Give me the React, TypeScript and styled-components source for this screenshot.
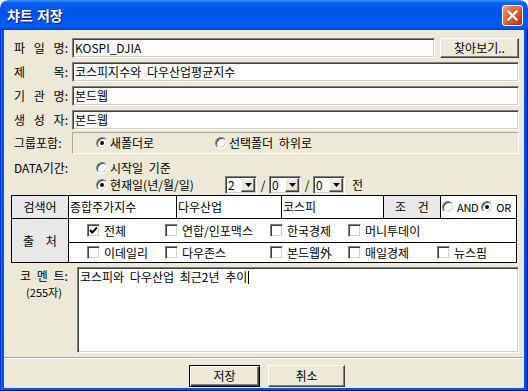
import React from "react";
import styled, { createGlobalStyle, css } from "styled-components";

const GlobalStyle = createGlobalStyle`
  html, body { margin: 0; padding: 0; background: #ffffff; }
  body {
    width: 528px; height: 391px; overflow: hidden;
    font-family: "Noto Sans CJK KR", "Noto Sans", sans-serif;
    font-size: 12px; line-height: 14px; color: #000; word-spacing: 3px;
  }
  * { box-sizing: border-box; }
`;

const Window = styled.div`
  width: 528px; height: 391px;
  display: flex; flex-direction: column;
  border-radius: 8px 8px 0 0; overflow: hidden;
`;

const TitleBar = styled.div`
  height: 30px; flex: none;
  display: flex; align-items: center; justify-content: space-between;
  padding: 0 5px 0 7px;
  background: linear-gradient(180deg, #3d95ff 0%, #0a5ff0 10%, #0054e8 40%, #005cf5 85%, #0058ee 93%, #0045d6 97%, #003dd0 100%);
  border-radius: 8px 8px 0 0;
`;

const TitleText = styled.span`
  color: #fff; font-weight: bold; font-size: 14px; line-height: 16px;
  word-spacing: 1px;
  text-shadow: 1px 1px #0f1089;
`;

const CloseButton = styled.span`
  width: 21px; height: 21px; display: flex; align-items: center; justify-content: center;
  border: 1px solid #fff; border-radius: 3px;
  background: radial-gradient(circle at 85% 85%, #c23c10 0%, #d9582a 45%, #e37a55 75%, #f2b79c 100%);
  box-shadow: inset -1px -1px 1px rgba(120, 30, 0, 0.4);
`;

const Frame = styled.div`
  flex: 1; display: flex; min-height: 0;
  padding: 0 4px 3px 4px;
  background: #0055e5;
  box-shadow: inset 1px 0 #0831d9, inset -1px 0 #00138c, inset 0 -1px #00138c, inset 2px 0 #166aee, inset -2px 0 #003bda;
`;

const Client = styled.div`
  flex: 1; display: flex; flex-direction: column; min-height: 0;
  background: #ece9d8;
  padding: 8px 5px 0 7px;
`;

const FieldRow = styled.div<{ $top?: number; $height?: number }>`
  display: flex; align-items: center; height: ${(p) => p.$height ?? 20}px;
  margin-top: ${(p) => p.$top ?? 4}px;
`;

const FieldLabel = styled.div`
  width: 57px; margin-right: 4px; padding-left: 3px;
  display: flex; justify-content: space-between; white-space: nowrap;
`;

const sunken = css`
  background: #fff;
  border: 1px solid; border-color: #808080 #fff #fff #808080;
  box-shadow: inset 1px 1px #404040, inset -1px -1px #d4d0c8;
`;

const TextBox = styled.div`
  flex: 1; height: 20px; ${sunken};
  display: flex; align-items: center; padding: 0 2px; white-space: nowrap;
`;

const raised = css`
  background: #ece9d8;
  border: 1px solid; border-color: #fff #404040 #404040 #fff;
  box-shadow: inset -1px -1px #808080, inset 1px 1px #ece9d8;
`;

const BrowseButton = styled.div`
  width: 79px; height: 20px; margin-left: 5px; ${raised};
  display: flex; align-items: center; justify-content: center; word-spacing: 0;
`;

const GroupBox = styled.div`
  flex: 1; height: 22px;
  border: 1px solid; border-color: #aca899 #fff #fff #aca899;
  display: flex; align-items: center; padding-left: 23px;
`;

const RadioOption = styled.div<{ $width?: number }>`
  display: flex; align-items: center; gap: 2px; white-space: nowrap;
  ${(p) => p.$width && css`width: ${p.$width}px; flex: none;`}
`;

const Radio = styled.span<{ $checked?: boolean }>`
  width: 12px; height: 12px; flex: none; border-radius: 50%;
  display: flex; align-items: center; justify-content: center;
  background: #fff;
  border: 1px solid; border-color: #808080 #fff #fff #808080;
  box-shadow: inset 1px 1px #404040, inset -1px -1px #d4d0c8;
  ${(p) => p.$checked && css`
    &::after { content: ""; width: 4px; height: 4px; border-radius: 50%; background: #000; }
  `}
`;

const DataGrid = styled.div`
  margin-top: 6px;
  display: grid; grid-template-columns: 61px 1fr; grid-template-rows: 15px 18px; row-gap: 1px;
  align-items: center;
`;

const DataOptions = styled.div`
  grid-column: 2; display: flex; align-items: center; padding-left: 24px;
`;

const ComboGroup = styled.div`
  display: flex; align-items: center;
`;

const Combo = styled.div`
  width: 32px; height: 18px; ${sunken};
  display: flex; align-items: center; padding: 1px 1px 1px 2px;
`;

const ComboText = styled.span`
  flex: 1;
`;

const ComboArrow = styled.span`
  width: 14px; height: 14px; ${raised};
  display: flex; align-items: center; justify-content: center;
`;

const Slash = styled.span`
  width: 12px; text-align: center;
`;

const Suffix = styled.span`
  margin-left: 7px;
`;

const SourceTable = styled.div`
  margin-top: 1px; width: 506px;
  display: grid;
  grid-template-columns: 56px 107px 104px 101px 56px 75px;
  grid-template-rows: 22px 23px 19px;
  gap: 1px; padding: 1px; background: #000;
`;

const HeadCell = styled.div<{ $rows?: string; $wide?: boolean }>`
  background: #e8e8e8;
  display: flex; align-items: center; justify-content: center; white-space: nowrap;
  ${(p) => p.$rows && css`grid-row: ${p.$rows};`}
  ${(p) => p.$wide && css`word-spacing: 9px;`}
`;

const ValueCell = styled.div`
  background: #fff; display: flex; align-items: center; padding-left: 1px; white-space: nowrap;
`;

const CondCell = styled.div`
  background: #fff; display: flex; align-items: center; padding-left: 1px; gap: 3px;
  word-spacing: 0; font-size: 11px; letter-spacing: -0.3px; white-space: nowrap;
`;

const CheckCell = styled.div`
  grid-column: 2 / 7; background: #fff;
  display: grid; grid-template-columns: 78px 105px 78px 89px auto; align-items: center;
  padding-left: 18px;
`;

const CheckItem = styled.div`
  display: flex; align-items: center; gap: 4px; white-space: nowrap;
`;

const CheckBox = styled.span`
  width: 13px; height: 13px; flex: none;
  display: flex; align-items: center; justify-content: center;
  background: #fff;
  border: 1px solid; border-color: #808080 #fff #fff #808080;
  box-shadow: inset 1px 1px #404040, inset -1px -1px #d4d0c8;
`;

const CommentRow = styled.div`
  margin-top: 4px; height: 86px; display: flex;
`;

const CommentLabel = styled.div`
  width: 66px; display: flex; flex-direction: column; align-items: center;
  white-space: nowrap; line-height: 17px;
`;

const CommentLimit = styled.span`
  font-size: 11px;
`;

const CommentBox = styled.div`
  flex: 1; ${sunken}; padding: 2px 2px 2px 2px; white-space: nowrap;
`;

const Caret = styled.span`
  display: inline-block; width: 1px; height: 13px; background: #000;
  vertical-align: -2px; margin-left: 1px;
`;

const Separator = styled.div`
  margin: 4px -5px 0 -7px; height: 2px;
  border-top: 1px solid #aca899; border-bottom: 1px solid #fff;
`;

const ButtonRow = styled.div`
  margin-top: 6px; display: flex; justify-content: center; gap: 8px; padding-left: 4px;
`;

const DialogButton = styled.div<{ $width: number; $default?: boolean }>`
  width: ${(p) => p.$width}px; height: 22px;
  display: flex; align-items: center; justify-content: center;
  background: #ece9d8;
  ${(p) =>
    p.$default
      ? css`
          border: 1px solid #000;
          box-shadow: inset 1px 1px #fff, inset -1px -1px #404040, inset -2px -2px #808080;
        `
      : raised}
`;

const Label: React.FC<{ text: string }> = ({ text }) => (
  <FieldLabel>
    {text.split(" ").map((w, i) => (
      <span key={i}>{w}</span>
    ))}
  </FieldLabel>
);

const Check: React.FC<{ checked?: boolean; text: string }> = ({ checked, text }) => (
  <CheckItem>
    <CheckBox>
      {checked && (
        <svg width="9" height="9" viewBox="0 0 9 9">
          <polyline points="1,4 3.2,6.5 8,1.5" fill="none" stroke="#000" strokeWidth="2" />
        </svg>
      )}
    </CheckBox>
    <span>{text}</span>
  </CheckItem>
);

const Arrow = () => (
  <svg width="7" height="4" viewBox="0 0 7 4">
    <polygon points="0,0 7,0 3.5,4" fill="#000" />
  </svg>
);

const ComboBox: React.FC<{ value: string }> = ({ value }) => (
  <Combo>
    <ComboText>{value}</ComboText>
    <ComboArrow>
      <Arrow />
    </ComboArrow>
  </Combo>
);

export default function App() {
  return (
    <>
      <GlobalStyle />
      <Window>
        <TitleBar>
          <TitleText>챠트 저장</TitleText>
          <CloseButton>
            <svg width="11" height="11" viewBox="0 0 11 11">
              <path d="M1.5 1.5 L9.5 9.5 M9.5 1.5 L1.5 9.5" stroke="#fff" strokeWidth="2.2" strokeLinecap="square" />
            </svg>
          </CloseButton>
        </TitleBar>
        <Frame>
          <Client>
            <FieldRow $top={0}>
              <Label text="파 일 명:" />
              <TextBox>KOSPI_DJIA</TextBox>
              <BrowseButton>찾아보기..</BrowseButton>
            </FieldRow>
            <FieldRow>
              <Label text="제 목:" />
              <TextBox>코스피지수와 다우산업평균지수</TextBox>
            </FieldRow>
            <FieldRow>
              <Label text="기 관 명:" />
              <TextBox>본드웹</TextBox>
            </FieldRow>
            <FieldRow>
              <Label text="생 성 자:" />
              <TextBox>본드웹</TextBox>
            </FieldRow>
            <FieldRow $top={2} $height={22}>
              <Label text="그룹포함:" />
              <GroupBox>
                <RadioOption $width={119}>
                  <Radio $checked />
                  <span>새폴더로</span>
                </RadioOption>
                <RadioOption>
                  <Radio />
                  <span>선택폴더 하위로</span>
                </RadioOption>
              </GroupBox>
            </FieldRow>
            <DataGrid>
              <Label text="DATA기간:" />
              <DataOptions>
                <RadioOption>
                  <Radio />
                  <span>시작일 기준</span>
                </RadioOption>
              </DataOptions>
              <DataOptions>
                <RadioOption $width={129}>
                  <Radio $checked />
                  <span>현재일(년/월/일)</span>
                </RadioOption>
                <ComboGroup>
                  <ComboBox value="2" />
                  <Slash>/</Slash>
                  <ComboBox value="0" />
                  <Slash>/</Slash>
                  <ComboBox value="0" />
                  <Suffix>전</Suffix>
                </ComboGroup>
              </DataOptions>
            </DataGrid>
            <SourceTable>
              <HeadCell>검색어</HeadCell>
              <ValueCell>종합주가지수</ValueCell>
              <ValueCell>다우산업</ValueCell>
              <ValueCell>코스피</ValueCell>
              <HeadCell $wide>조 건</HeadCell>
              <CondCell>
                <Radio />
                <span>AND</span>
                <Radio $checked />
                <span>OR</span>
              </CondCell>
              <HeadCell $rows="2 / 4" $wide>
                출 처
              </HeadCell>
              <CheckCell>
                <Check checked text="전체" />
                <Check text="연합/인포맥스" />
                <Check text="한국경제" />
                <Check text="머니투데이" />
              </CheckCell>
              <CheckCell>
                <Check text="이데일리" />
                <Check text="다우존스" />
                <Check text="본드웹外" />
                <Check text="매일경제" />
                <Check text="뉴스핌" />
              </CheckCell>
            </SourceTable>
            <CommentRow>
              <CommentLabel>
                <span>코 멘 트:</span>
                <CommentLimit>(255자)</CommentLimit>
              </CommentLabel>
              <CommentBox>
                코스피와 다우산업 최근2년 추이
                <Caret />
              </CommentBox>
            </CommentRow>
            <Separator />
            <ButtonRow>
              <DialogButton $width={71} $default>
                저장
              </DialogButton>
              <DialogButton $width={77}>취소</DialogButton>
            </ButtonRow>
          </Client>
        </Frame>
      </Window>
    </>
  );
}
